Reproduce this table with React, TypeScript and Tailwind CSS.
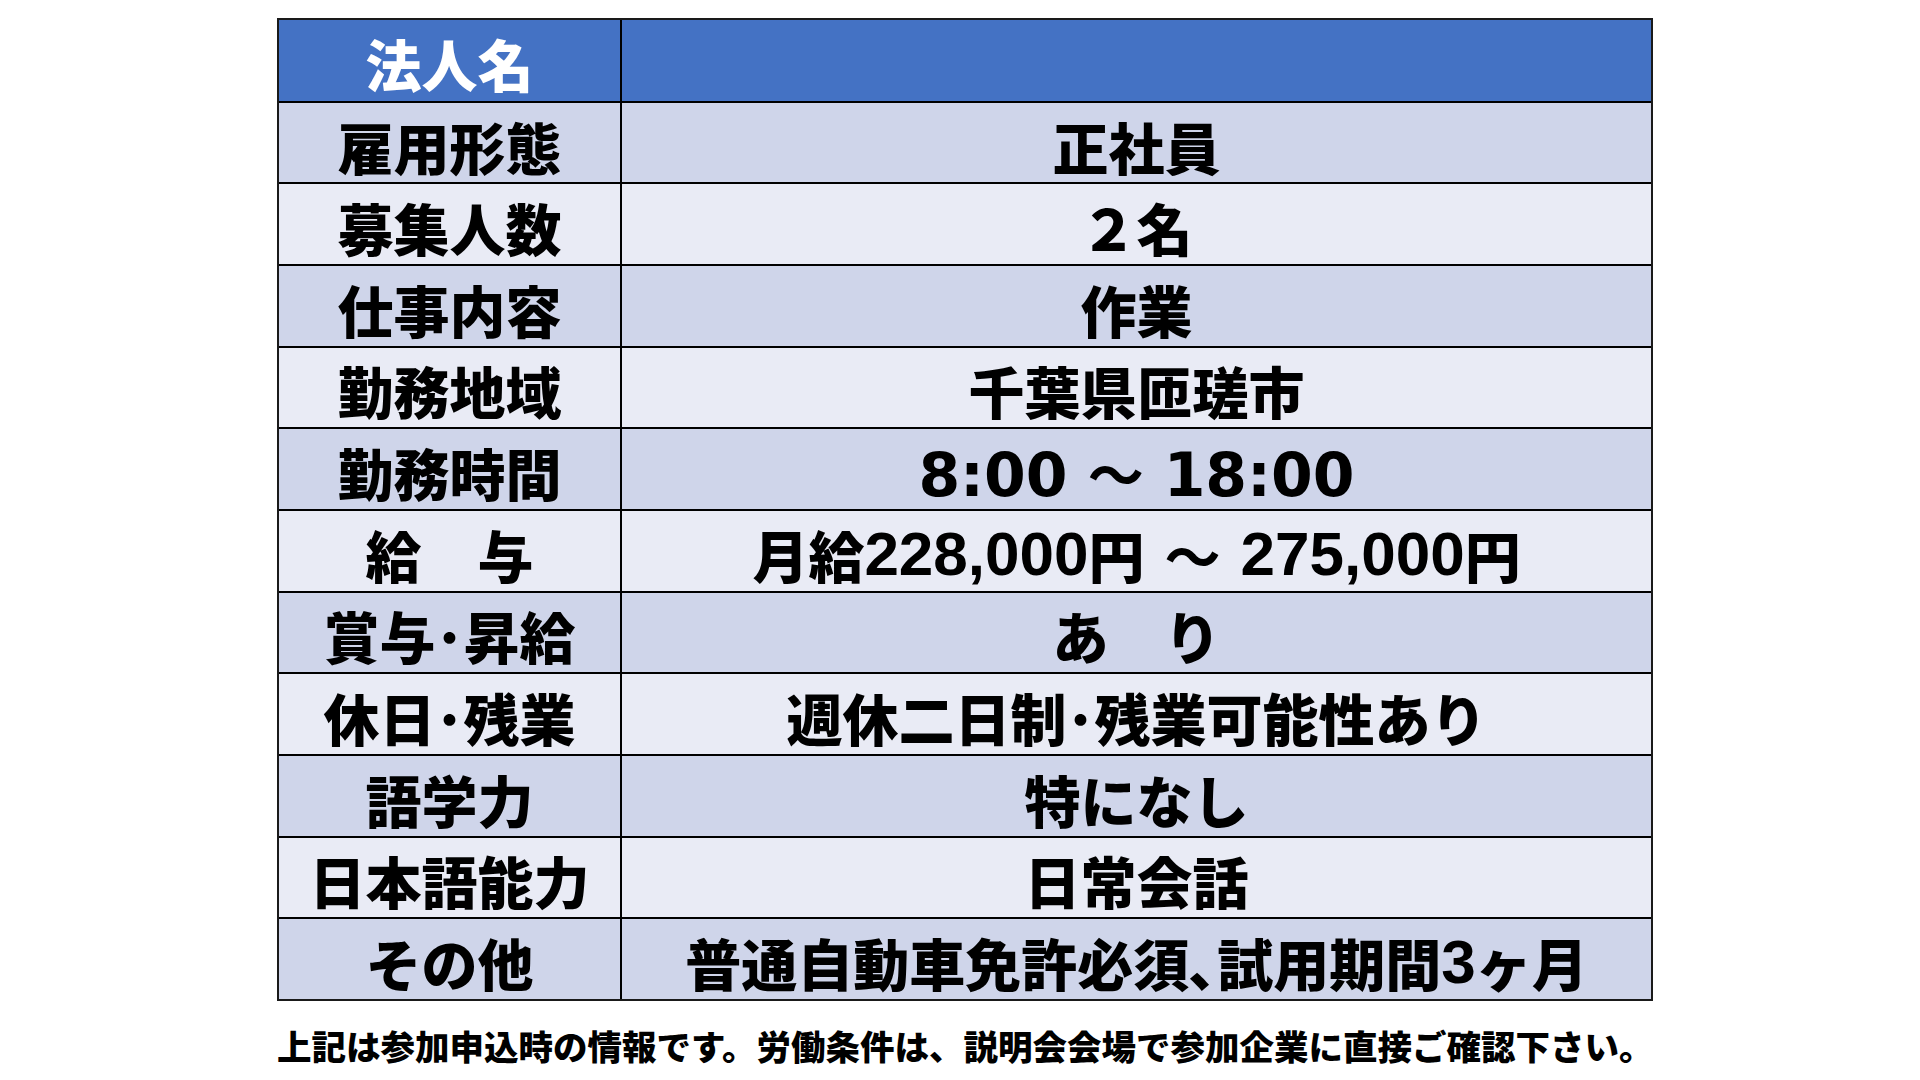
import React from "react";

type Row = {
  label: React.ReactNode;
  value: React.ReactNode;
};

const Num = ({ children }: { children: React.ReactNode }) => (
  <span className="font-['Liberation_Sans',sans-serif] font-bold text-[62px]">
    {children}
  </span>
);

const Time = ({ children }: { children: React.ReactNode }) => (
  <span className="font-['DejaVu_Sans',sans-serif] font-bold text-[60px] relative top-[3px]">
    {children}
  </span>
);

const Tilde = () => <span className="mx-[20px] font-bold">～</span>;

const rows: Row[] = [
  { label: "雇用形態", value: "正社員" },
  { label: "募集人数", value: "２名" },
  { label: "仕事内容", value: "作業" },
  { label: "勤務地域", value: "千葉県匝瑳市" },
  {
    label: "勤務時間",
    value: (
      <>
        <Time>8:00</Time>
        <Tilde />
        <Time>18:00</Time>
      </>
    ),
  },
  {
    label: "給　与",
    value: (
      <>
        月給<Num>228,000</Num>円<Tilde />
        <Num>275,000</Num>円
      </>
    ),
  },
  { label: "賞与･昇給", value: "あ　り" },
  { label: "休日･残業", value: "週休二日制･残業可能性あり" },
  { label: "語学力", value: "特になし" },
  { label: "日本語能力", value: "日常会話" },
  {
    label: "その他",
    value: (
      <>
        普通自動車免許必須､試用期間<Num>3</Num>ヶ月
      </>
    ),
  },
];

export default function App() {
  return (
    <div className="min-h-screen w-full bg-white font-['Noto_Sans_CJK_JP',sans-serif] font-black text-black">
      <div className="ml-[277px] pt-[18px] w-[1376px]">
        <div className="border-2 border-[#1a1a1a]">
          {/* header */}
          <div className="flex h-[80.7px] bg-[#4472C4]">
            <div className="w-[343px] shrink-0 border-r-2 border-black flex items-center justify-center pt-[6px] text-[56px] leading-none text-white">
              法人名
            </div>
            <div className="flex-1" />
          </div>
          {rows.map((r, i) => (
            <div
              key={i}
              className={`flex h-[81.67px] border-t-2 border-black ${
                i % 2 === 0 ? "bg-[#CFD5EA]" : "bg-[#E9EBF5]"
              }`}
            >
              <div className="w-[343px] shrink-0 border-r-2 border-black flex items-center justify-center pt-[6px] text-[56px] leading-none whitespace-nowrap">
                {r.label}
              </div>
              <div className="flex-1 flex items-center justify-center pt-[6px] text-[56px] leading-none whitespace-nowrap">
                {r.value}
              </div>
            </div>
          ))}
        </div>
        <p className="mt-[24px] text-[34.5px] leading-[41px] whitespace-nowrap">
          上記は参加申込時の情報です。労働条件は、説明会会場で参加企業に直接ご確認下さい。
        </p>
      </div>
    </div>
  );
}
